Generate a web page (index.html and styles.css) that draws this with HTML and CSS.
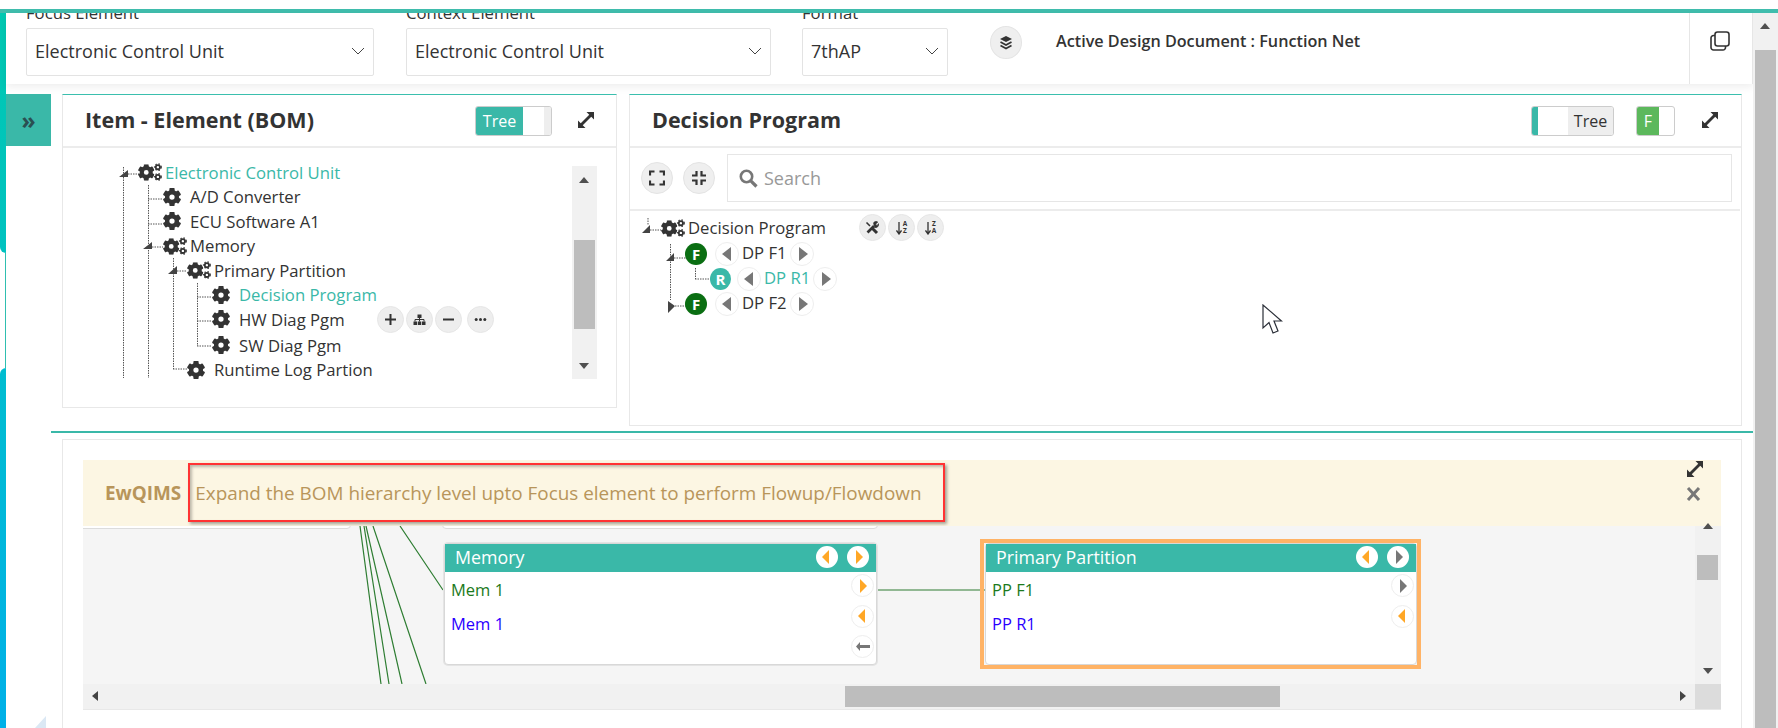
FILE: index.html
```html
<!DOCTYPE html>
<html lang="en">
<head>
<meta charset="utf-8">
<title>Function Net</title>
<link rel="stylesheet" href="styles.css">
</head>
<body>
<svg class="sprite" xmlns="http://www.w3.org/2000/svg">
  <symbol id="gear" viewBox="0 0 24 24">
    <g fill="#333">
      <rect x="8.5" y="0" width="7" height="6" rx="1"/>
      <rect x="8.5" y="0" width="7" height="6" rx="1" transform="rotate(60 12 12)"/>
      <rect x="8.5" y="0" width="7" height="6" rx="1" transform="rotate(120 12 12)"/>
      <rect x="8.5" y="0" width="7" height="6" rx="1" transform="rotate(180 12 12)"/>
      <rect x="8.5" y="0" width="7" height="6" rx="1" transform="rotate(240 12 12)"/>
      <rect x="8.5" y="0" width="7" height="6" rx="1" transform="rotate(300 12 12)"/>
    </g>
    <circle cx="12" cy="12" r="6.500" fill="none" stroke="#333" stroke-width="6"/>
  </symbol>
  <symbol id="gears" viewBox="0 0 32 23">
    <use href="#gear" x="0" y="1" width="22" height="22"/>
    <g fill="none" stroke="#333" stroke-width="2.400">
      <circle cx="26.500" cy="5" r="2.800"/>
      <circle cx="26.500" cy="18" r="2.800"/>
    </g>
    <g stroke="#333" stroke-width="1.800" stroke-dasharray="1.800 2.400" fill="none">
      <circle cx="26.500" cy="5" r="4.400"/>
      <circle cx="26.500" cy="18" r="4.400"/>
    </g>
  </symbol>
  <symbol id="expand" viewBox="0 0 18 18">
    <path d="M4 14L14 4" stroke="#333" stroke-width="2.800" fill="none"/>
    <path d="M9.500 1H17V8.500ZM1 9.500V17H8.500Z" fill="#333"/>
  </symbol>
</svg>

<div class="shell">
  <div class="topline"></div>
  <div class="frame">
    <div class="stripe">
      <div class="stripe-a"></div>
      <div class="stripe-b"></div>
      <div class="stripe-c"></div>
    </div>

    <div class="main">
      <header class="toolbar">
        <div class="field field-a">
          <label class="field-label">Focus Element</label>
          <div class="select"><span>Electronic Control Unit</span><svg class="chev" viewBox="0 0 14 8"><path d="M1 1l6 6 6-6"/></svg></div>
        </div>
        <div class="field field-b">
          <label class="field-label">Context Element</label>
          <div class="select"><span>Electronic Control Unit</span><svg class="chev" viewBox="0 0 14 8"><path d="M1 1l6 6 6-6"/></svg></div>
        </div>
        <div class="field field-c">
          <label class="field-label">Format</label>
          <div class="select"><span>7thAP</span><svg class="chev" viewBox="0 0 14 8"><path d="M1 1l6 6 6-6"/></svg></div>
        </div>
        <button class="round round-layers" type="button">
          <svg width="14" height="14" viewBox="0 0 14 14"><path d="M7 0L13 3 7 6 1 3Z" fill="#333"/><path d="M1.500 6L7 9 12.500 6M1.500 9.500L7 12.500 12.500 9.500" fill="none" stroke="#333" stroke-width="1.700"/></svg>
        </button>
        <div class="active-doc">Active Design Document : Function Net</div>
        <div class="tool-end">
          <svg width="20" height="20" viewBox="0 0 20 20" fill="none" stroke="#333" stroke-width="1.600"><rect x="5" y="1" width="14" height="14" rx="2.500"/><path d="M5 4.500H3.500A2.500 2.500 0 0 0 1 7v9.500A2.500 2.500 0 0 0 3.500 19H13a2.500 2.500 0 0 0 2.500-2.500V15"/></svg>
        </div>
      </header>

      <div class="top-row">
        <button class="side-toggle" type="button">»</button>

        <section class="panel panel-bom">
          <div class="panel-head">
            <h2 class="panel-title">Item - Element (BOM)</h2>
            <div class="toggle toggle-on"><span class="seg-teal">Tree</span><span class="seg-white"></span><span class="seg-grey"></span></div>
            <svg class="expand expand-bom"><use href="#expand"/></svg>
          </div>
          <div class="bom-body">
            <div class="tree">
              <svg class="tree-lines" width="509" height="219">
                <g class="dots">
                  <path d="M60.500 8V219M85.500 26V219M110.500 99V210M134.500 124V187"/>
                  <path d="M65 15H76M85 40H100M85 65H100M89 88H100M114 112H124M134 138H149M134 162H149M134 187H149M110 210H124"/>
                </g>
                <path class="tw" d="M65 11V18H56ZM89 83V90H80ZM114 107V115H105Z"/>
              </svg>
              <div class="t-row lv0"><svg class="ic-2"><use href="#gears"/></svg><span class="t-on">Electronic Control Unit</span></div>
              <div class="t-row lv1"><svg class="ic-1"><use href="#gear"/></svg><span>A/D Converter</span></div>
              <div class="t-row lv1"><svg class="ic-1"><use href="#gear"/></svg><span>ECU Software A1</span></div>
              <div class="t-row lv1"><svg class="ic-2"><use href="#gears"/></svg><span>Memory</span></div>
              <div class="t-row lv2"><svg class="ic-2"><use href="#gears"/></svg><span>Primary Partition</span></div>
              <div class="t-row lv3"><svg class="ic-1"><use href="#gear"/></svg><span class="t-on">Decision Program</span></div>
              <div class="t-row lv3"><svg class="ic-1"><use href="#gear"/></svg><span>HW Diag Pgm</span>
                <div class="hover-tools">
                  <button class="mini" type="button"><svg width="13" height="13" viewBox="0 0 13 13"><path d="M6.500 1v11M1 6.500h11" stroke="#333" stroke-width="2"/></svg></button>
                  <button class="mini" type="button"><svg width="13" height="13" viewBox="0 0 13 13" fill="#333"><rect x="4.500" y="1.500" width="4" height="3.500"/><rect x="0.500" y="8.500" width="3.500" height="3.500"/><rect x="4.750" y="8.500" width="3.500" height="3.500"/><rect x="9" y="8.500" width="3.500" height="3.500"/><path d="M2 8.500V6.500h9v2M6.500 5v3.500" fill="none" stroke="#333"/></svg></button>
                  <button class="mini" type="button"><svg width="13" height="13" viewBox="0 0 13 13"><path d="M1 6.500h11" stroke="#333" stroke-width="2"/></svg></button>
                  <button class="mini mini-wide" type="button"><svg width="13" height="13" viewBox="0 0 13 13" fill="#333"><circle cx="2.200" cy="6.500" r="1.500"/><circle cx="6.500" cy="6.500" r="1.500"/><circle cx="10.800" cy="6.500" r="1.500"/></svg></button>
                </div>
              </div>
              <div class="t-row lv3 t-gap"><svg class="ic-1"><use href="#gear"/></svg><span>SW Diag Pgm</span></div>
              <div class="t-row lv2"><svg class="ic-1"><use href="#gear"/></svg><span>Runtime Log Partion</span></div>
            </div>
            <div class="vscroll vscroll-tree">
              <i class="up"></i>
              <div class="thumb"></div>
              <i class="down"></i>
            </div>
          </div>
        </section>

        <section class="panel panel-dp">
          <div class="panel-head">
            <h2 class="panel-title">Decision Program</h2>
            <div class="toggle toggle-off"><span class="seg-mark"></span><span class="seg-blank"></span><span class="seg-label">Tree</span></div>
            <div class="toggle toggle-f"><span class="seg-green">F</span></div>
            <svg class="expand expand-dp"><use href="#expand"/></svg>
          </div>
          <div class="search-row">
            <button class="round round-sm" type="button">
              <svg width="16" height="16" viewBox="0 0 16 16" fill="none" stroke="#333" stroke-width="2.200"><path d="M1 5.500V1.500H5.500M10.500 1.500H15V5.500M15 10.500V14.500H10.500M5.500 14.500H1V10.500"/></svg>
            </button>
            <button class="round round-sm" type="button">
              <svg width="16" height="16" viewBox="0 0 16 16" fill="none" stroke="#333" stroke-width="2.200"><path d="M5.500 1V5.500H1M10.500 1V5.500H15M15 10.500H10.500V15M5.500 15V10.500H1"/></svg>
            </button>
            <div class="search">
              <svg width="19" height="19" viewBox="0 0 19 19" fill="none" stroke="#777" stroke-width="2.600"><circle cx="7.500" cy="7.500" r="5.700"/><path d="M11.800 11.800L17.500 17.500" stroke-width="3.200"/></svg>
              <span>Search</span>
            </div>
          </div>
          <div class="dp-tree">
            <svg class="tree-lines" width="220" height="110">
              <g class="dots">
                <path d="M18 8V15M40.500 34V90M65.500 58V69M20 20H31M44 48H56M65 69H81M45 96H56"/>
              </g>
              <path class="tw" d="M20 15V23H12ZM44 43V51H36ZM38 91L45 96 38 103Z"/>
            </svg>
            <div class="dp-row dp-0"><svg class="ic-2"><use href="#gears"/></svg><span>Decision Program</span>
              <div class="dp-tools">
                <button class="mini" type="button"><svg width="14" height="14" viewBox="0 0 14 14" fill="none" stroke="#333"><path d="M2.500 11.500L9 5" stroke-width="2.600"/><path d="M8.500 1.800A3 3 0 0 1 12.800 1L10.800 3 11 4.200 12.200 4.400 13.600 2.600A3.200 3.200 0 0 1 9.500 6.500Z" fill="#333" stroke-width=".6"/><path d="M1.500 1.500L5 5" stroke-width="1.600"/><path d="M6.500 6.500L12 12" stroke-width="3"/></svg></button>
                <button class="mini mini-sort" type="button"><svg width="6" height="14" viewBox="0 0 6 14"><path d="M3 1v11M.5 9.500L3 13l2.500-3.500" fill="none" stroke="#333" stroke-width="1.300"/></svg><span class="az"><b>A</b><b>Z</b></span></button>
                <button class="mini mini-sort" type="button"><svg width="6" height="14" viewBox="0 0 6 14"><path d="M3 1v11M.5 9.500L3 13l2.500-3.500" fill="none" stroke="#333" stroke-width="1.300"/></svg><span class="az"><b>Z</b><b>A</b></span></button>
              </div>
            </div>
            <div class="dp-row dp-1"><span class="badge badge-f">F</span><i class="arr arr-l"></i><span class="dp-text">DP F1</span><i class="arr arr-r"></i></div>
            <div class="dp-row dp-2"><span class="badge badge-r">R</span><i class="arr arr-l"></i><span class="dp-text t-on">DP R1</span><i class="arr arr-r"></i></div>
            <div class="dp-row dp-3"><span class="badge badge-f">F</span><i class="arr arr-l"></i><span class="dp-text">DP F2</span><i class="arr arr-r"></i></div>
          </div>
        </section>
      </div>

      <div class="split"></div>

      <section class="panel panel-net">
        <div class="alert">
          <strong class="alert-brand">EwQIMS</strong>
          <span class="alert-text">Expand the BOM hierarchy level upto Focus element to perform Flowup/Flowdown</span>
          <div class="callout"></div>
          <svg class="expand expand-alert"><use href="#expand"/></svg>
          <svg class="alert-x" width="15" height="14" viewBox="0 0 15 14"><path d="M2 1l11 12M13 1L2 13" stroke="#777" stroke-width="3"/></svg>
        </div>
        <div class="net-grid">
          <div class="canvas">
            <div class="stub stub-a"></div>
            <div class="stub stub-b"></div>
            <svg class="wires" width="1612" height="158">
              <path d="M277 0L298 158M281 0L306 158M283 0L319 158M290 0L343 158M317 0L360 64M794 64H902"/>
            </svg>
            <article class="node node-mem">
              <div class="node-head"><span>Memory</span><i class="hbtn hbtn-l"></i><i class="hbtn hbtn-r"></i></div>
              <div class="node-body">
                <div class="ports"><div class="port-f">Mem 1</div><div class="port-r">Mem 1</div></div>
                <div class="side">
                  <i class="sbtn s-r"></i>
                  <i class="sbtn s-l"></i>
                  <i class="sbtn s-back">
                    <svg width="14" height="9" viewBox="0 0 14 9"><path d="M4 0L0 4.500 4 9V6h10V3H4Z" fill="#777"/></svg>
                  </i>
                </div>
              </div>
            </article>
            <div class="node-sel">
              <article class="node node-pp">
                <div class="node-head"><span>Primary Partition</span><i class="hbtn hbtn-l"></i><i class="hbtn hbtn-r hbtn-grey"></i></div>
                <div class="node-body">
                  <div class="ports"><div class="port-f">PP F1</div><div class="port-r">PP R1</div></div>
                  <div class="side">
                    <i class="sbtn s-r s-grey"></i>
                    <i class="sbtn s-l"></i>
                  </div>
                </div>
              </article>
            </div>
          </div>
          <div class="vbar"><i class="up"></i><div class="thumb"></div><i class="down"></i></div>
          <div class="hbar"><i class="left"></i><div class="thumb"></div><i class="right"></i></div>
          <div class="corner"></div>
        </div>
      </section>
    </div>

    <div class="page-scroll">
      <i class="up"></i>
      <div class="thumb"></div>
    </div>
  </div>

  <svg class="cursor" width="21" height="31" viewBox="0 0 21 31"><path d="M1 1V24L7 18.500 11 29 16 27 12 17H19.500Z" fill="#fff" stroke="#2b2f38" stroke-width="1.200"/></svg>
  <svg class="grip" width="11" height="12" viewBox="0 0 11 12"><path d="M11 0V12H0Z" fill="#dbe8f4"/></svg>
</div>
</body>
</html>
```

FILE: styles.css
```css
* { box-sizing: border-box; }
html, body { margin: 0; padding: 0; background: #fff; }
body { font-family: "Open Sans", "Noto Sans", sans-serif; color: #333; overflow: hidden; }
button { font-family: inherit; padding: 0; cursor: pointer; }
i { display: block; font-style: normal; }
.sprite { display: none; }

.shell { position: relative; width: 1778px; height: 728px; padding-top: 9px; overflow: hidden; display: flex; flex-direction: column; }
.topline { flex: 0 0 4px; background: #40bdad; }
.frame { flex: 1; min-height: 0; display: flex; }

.stripe { flex: 0 0 6px; display: flex; flex-direction: column; }
.stripe-a { height: 240px; background: linear-gradient(#00c9b2, #00c2c0); border-bottom-left-radius: 6px; }
.stripe-b { height: 115px; width: 1px; margin-left: 5px; background: #2fbfb0; }
.stripe-c { flex: 1; background: linear-gradient(#00bdd0, #00b0e8); border-top-left-radius: 6px; }

.main { flex: 1; min-width: 0; display: flex; flex-direction: column; }

.toolbar { flex: 0 0 71px; height: 71px; display: flex; align-items: flex-end; padding: 0 0 8px 20px; overflow: hidden; border-right: 1px solid #e6e6e6; box-shadow: 0 3px 8px rgba(0,0,0,.07); position: relative; }
.field { display: flex; flex-direction: column; justify-content: flex-end; height: 63px; flex: none; }
.field-a { width: 348px; }
.field-b { width: 365px; margin-left: 32px; }
.field-c { width: 146px; margin-left: 31px; }
.field-label { flex: none; font-size: 16.700px; line-height: 20px; margin-bottom: 5px; white-space: nowrap; color: #333; }
.select { flex: none; height: 48px; display: flex; align-items: center; justify-content: space-between; padding: 0 8px 2px 8px; border: 1px solid #e3e3e3; border-radius: 2px; font-size: 18px; color: #333; background: #fff; }
.chev { width: 14px; height: 8px; fill: none; stroke: #444; stroke-width: 1; }

.round { border: 1px solid #e4e4e4; background: #efefef; border-radius: 50%; display: flex; align-items: center; justify-content: center; flex: none; }
.round-layers { width: 32px; height: 33px; margin: 0 0 17px 42px; }
.active-doc { margin: 0 0 25px 34px; font-size: 16.200px; font-weight: 600; line-height: 20px; color: #333; white-space: nowrap; }
.tool-end { margin-left: auto; align-self: stretch; width: 63px; margin-bottom: -8px; border-left: 1px solid #e6e6e6; padding: 18px 0 0 20px; }

.top-row { display: flex; align-items: flex-start; padding-top: 10px; }
.side-toggle { flex: none; width: 45px; height: 52px; border: 0; background: #3ab8a8; color: #2a4f52; font-size: 23px; line-height: 44px; font-weight: 700; }
.panel { background: #fff; border: 1px solid #e8e8e8; }
.panel-bom { flex: none; width: 555px; height: 314px; margin-left: 11px; border-top: 1px solid #3bbfae; }
.panel-dp { flex: none; width: 1113px; height: 332px; margin-left: 12px; border-top: 1px solid #3bbfae; }
.panel-head { height: 53px; display: flex; align-items: center; border-bottom: 2px solid #ececec; padding-left: 22px; }
.panel-title { margin: 0 0 2px; font-size: 21.500px; font-weight: 700; color: #333; line-height: 28px; white-space: nowrap; }
.expand { width: 18px; height: 18px; flex: none; }
.toggle { height: 30px; display: flex; border: 1px solid #ccc; border-radius: 3px; overflow: hidden; flex: none; font-size: 16px; line-height: 28px; margin-top: 1px; }
.toggle-on { width: 77px; margin-left: auto; }
.seg-teal { width: 47px; background: #3ab8a8; color: #fff; text-align: center; }
.seg-white { width: 21px; background: #fff; }
.seg-grey { flex: 1; background: #eee; }
.expand-bom { margin: -2px 21px 0 25px; }
.toggle-off { width: 83px; margin-left: auto; }
.seg-mark { width: 6px; background: #3ab8a8; }
.seg-blank { width: 30px; }
.seg-label { flex: 1; background: #eee; color: #333; text-align: center; }
.toggle-f { width: 39px; margin-left: 22px; }
.seg-green { width: 22px; background: #5cb85c; color: #fff; text-align: center; }
.expand-dp { margin: -2px 22px 0 26px; }

.bom-body { display: flex; padding: 11px 19px 0 0; }
.tree { position: relative; flex: 1; height: 219px; padding-top: 1px; font-size: 16.700px; }
.tree-lines { position: absolute; left: 0; top: 0; }
.dots path { fill: none; stroke: #555; stroke-width: 1; stroke-dasharray: 1.500 1; }
.tw { fill: #444; }
.t-row { position: relative; height: 24.500px; display: flex; align-items: center; white-space: nowrap; }
.t-row > svg { flex: none; }
.t-row > span { color: #333; }
.t-row > span.t-on, .t-on { color: #3ab8a8; }
.lv0 { padding-left: 75px; }
.lv1 { padding-left: 100px; }
.lv2 { padding-left: 124px; }
.lv3 { padding-left: 149px; }
.t-gap { margin-top: 1.500px; }
.ic-1 { width: 18px; height: 18px; margin-right: 9px; }
.ic-2 { width: 24px; height: 18px; margin-right: 3px; }
.hover-tools { display: flex; margin-left: 32px; gap: 2px; }
.mini { width: 27px; height: 27px; border-radius: 50%; background: #eee; border: 1px solid #e6e6e6; display: flex; align-items: center; justify-content: center; flex: none; }
.mini-wide { margin-left: 3px; }

.vscroll { flex: none; width: 25px; background: #f1f1f1; position: relative; }
.vscroll-tree { margin-top: 7px; height: 213px; padding-top: 74px; }
.vscroll-tree .thumb { width: 21px; height: 89px; margin-left: 2px; background: #bdbdbd; }
.up, .down { position: absolute; width: 0; height: 0; border-left: 5.500px solid transparent; border-right: 5.500px solid transparent; }
.up { border-bottom: 6px solid #505050; }
.down { border-top: 6px solid #505050; }
.vscroll-tree .up { left: 7px; top: 11px; }
.vscroll-tree .down { left: 7px; bottom: 10px; }

.search-row { height: 63px; display: flex; align-items: center; margin-right: 1px; border-bottom: 2px solid #ececec; padding: 0 8px 1px 11px; gap: 10px; }
.round-sm { width: 32px; height: 32px; }
.search { flex: 1; height: 48px; margin-left: 2px; border: 1px solid #e6e6e6; display: flex; align-items: center; padding-left: 11px; gap: 6px; color: #999; font-size: 18px; }
.dp-tree { position: relative; padding-top: 3px; font-size: 16.700px; }
.dp-tree .tree-lines { top: -1px; }
.dp-row { display: flex; align-items: center; white-space: nowrap; position: relative; }
.dp-0 { height: 27px; padding-left: 31px; }
.dp-1, .dp-3 { height: 26px; padding-left: 55px; }
.dp-2 { height: 24px; padding-left: 80px; }
.dp-tools { display: flex; margin-left: 33px; gap: 2px; }
.mini-sort { gap: 1px; }
.az { display: flex; flex-direction: column; font-size: 6.500px; line-height: 6.500px; }
.az b { font-weight: 700; color: #333; }
.badge { width: 22px; height: 22px; border-radius: 50%; color: #fff; display: flex; align-items: center; justify-content: center; font-size: 15px; font-weight: 700; margin-right: 8px; flex: none; }
.badge-f { background: #0a6e12; }
.badge-r { background: #3ab8a8; margin-right: 6px; width: 21px; }
.arr { width: 24px; height: 24px; border-radius: 50%; background: #fff; border: 1px solid #eee; position: relative; flex: none; }
.arr::after { content: ""; position: absolute; top: 4px; width: 0; height: 0; border-top: 7px solid transparent; border-bottom: 7px solid transparent; }
.arr-l::after { left: 6px; border-right: 9px solid #777; }
.arr-r::after { left: 8px; border-left: 9px solid #777; }
.dp-text { margin: -3px 3px 0; }

.split { height: 2px; margin: 5px 0 0 45px; background: #3ab8a8; flex: none; }
.panel-net { flex: none; margin: 6px 0 0 56px; width: 1680px; height: 320px; padding: 20px 20px 0; }
.alert { position: relative; height: 66px; background: #fcf6e3; display: flex; align-items: center; padding-left: 22px; color: #b8955a; font-size: 18.900px; white-space: nowrap; }
.alert-brand { font-weight: 700; }
.alert-text { margin-left: 14px; }
.callout { position: absolute; left: 105px; top: 3px; width: 757px; height: 59px; border: 2px solid #f33; box-shadow: 2px 2px 3px rgba(0,0,0,.35), inset 2px 2px 3px rgba(0,0,0,.25); pointer-events: none; }
.expand-alert { position: absolute; right: 17px; top: 0; }
.alert-x { position: absolute; right: 20px; top: 27px; }

.net-grid { display: grid; grid-template-columns: 1612px 26px; grid-template-rows: 158px 25px; border-bottom: 1px solid #e8e8e8; }
.canvas { position: relative; background: #f5f5f5; overflow: hidden; }
.stub { position: absolute; top: -20px; height: 23px; background: #fff; border: 1px solid #dcdcdc; border-radius: 4px; }
.stub-a { left: -4px; width: 272px; }
.stub-b { left: 359px; width: 436px; }
.wires { position: absolute; left: 0; top: 0; }
.wires path { fill: none; stroke: #2e7d32; stroke-width: 1.200; }
.node { background: #fff; border: 1px solid #d8d8d8; box-shadow: 0 0 0 1px #e4e4e4; border-radius: 4px; display: flex; flex-direction: column; }
.node-mem { position: absolute; left: 361px; top: 17px; width: 433px; height: 122px; }
.node-sel { position: absolute; left: 897px; top: 13px; width: 441px; height: 130px; border: 4px solid #ffb366; }
.node-pp { height: 100%; margin: 0 0 0 1px; width: 432px; box-shadow: none; }
.node-head { height: 28px; flex: none; background: #3ab8a8; color: #fff; font-size: 17.800px; display: flex; align-items: center; padding: 0 7px 0 10px; gap: 9px; }
.node-head span { margin: 0 auto 3px 0; }
.hbtn { width: 22px; height: 22px; border-radius: 50%; background: #fff; position: relative; flex: none; margin-bottom: 2px; }
.hbtn::after, .sbtn.s-l::after, .sbtn.s-r::after { content: ""; position: absolute; width: 0; height: 0; border-top: 7px solid transparent; border-bottom: 7px solid transparent; top: 4px; }
.hbtn-l::after { left: 6px; border-right: 7px solid #ffa726; }
.hbtn-r::after { left: 9px; border-left: 7px solid #ffa726; }
.hbtn-r.hbtn-grey::after { border-left-color: #777; }
.node-body { flex: 1; display: flex; justify-content: space-between; min-height: 0; }
.ports { padding: 1px 0 0 6px; font-size: 16.500px; line-height: 34px; }
.port-f { color: #1c7a1c; }
.port-r { color: #2a00ff; }
.side { display: flex; flex-direction: column; gap: 7.500px; padding: 2px 2px 0 0; }
.sbtn { width: 23px; height: 23px; border-radius: 50%; background: #fff; border: 1px solid #eee; position: relative; display: flex; align-items: center; justify-content: center; }
.sbtn.s-l::after { left: 6px; top: 3.500px; border-right: 7px solid #ffa726; }
.sbtn.s-r::after { left: 8px; top: 3.500px; border-left: 7px solid #ffa726; }
.sbtn.s-r.s-grey::after { border-left-color: #777; }

.vbar { position: relative; background: #f1f1f1; padding-top: 29px; }
.vbar .thumb { width: 21px; height: 25px; margin-left: 2px; background: #bdbdbd; }
.vbar .up { left: 8px; top: -3px; }
.vbar .down { left: 8px; bottom: 10px; }
.hbar { position: relative; background: #f1f1f1; padding: 2px 0 0 762px; }
.hbar .thumb { width: 435px; height: 21px; background: #bdbdbd; }
.left, .right { position: absolute; top: 7px; width: 0; height: 0; border-top: 5.500px solid transparent; border-bottom: 5.500px solid transparent; }
.left { left: 9px; border-right: 6px solid #444; }
.right { right: 9px; border-left: 6px solid #444; }
.corner { background: #dcdcdc; }

.page-scroll { flex: 0 0 25px; background: #f1f1f1; position: relative; padding-top: 37px; }
.page-scroll .thumb { width: 21px; height: 100%; margin-left: 2px; background: #bdbdbd; }
.page-scroll .up { left: 7px; top: 10px; }

.cursor { position: absolute; left: 1262px; top: 304px; }
.grip { position: absolute; left: 35px; top: 716px; }
```
